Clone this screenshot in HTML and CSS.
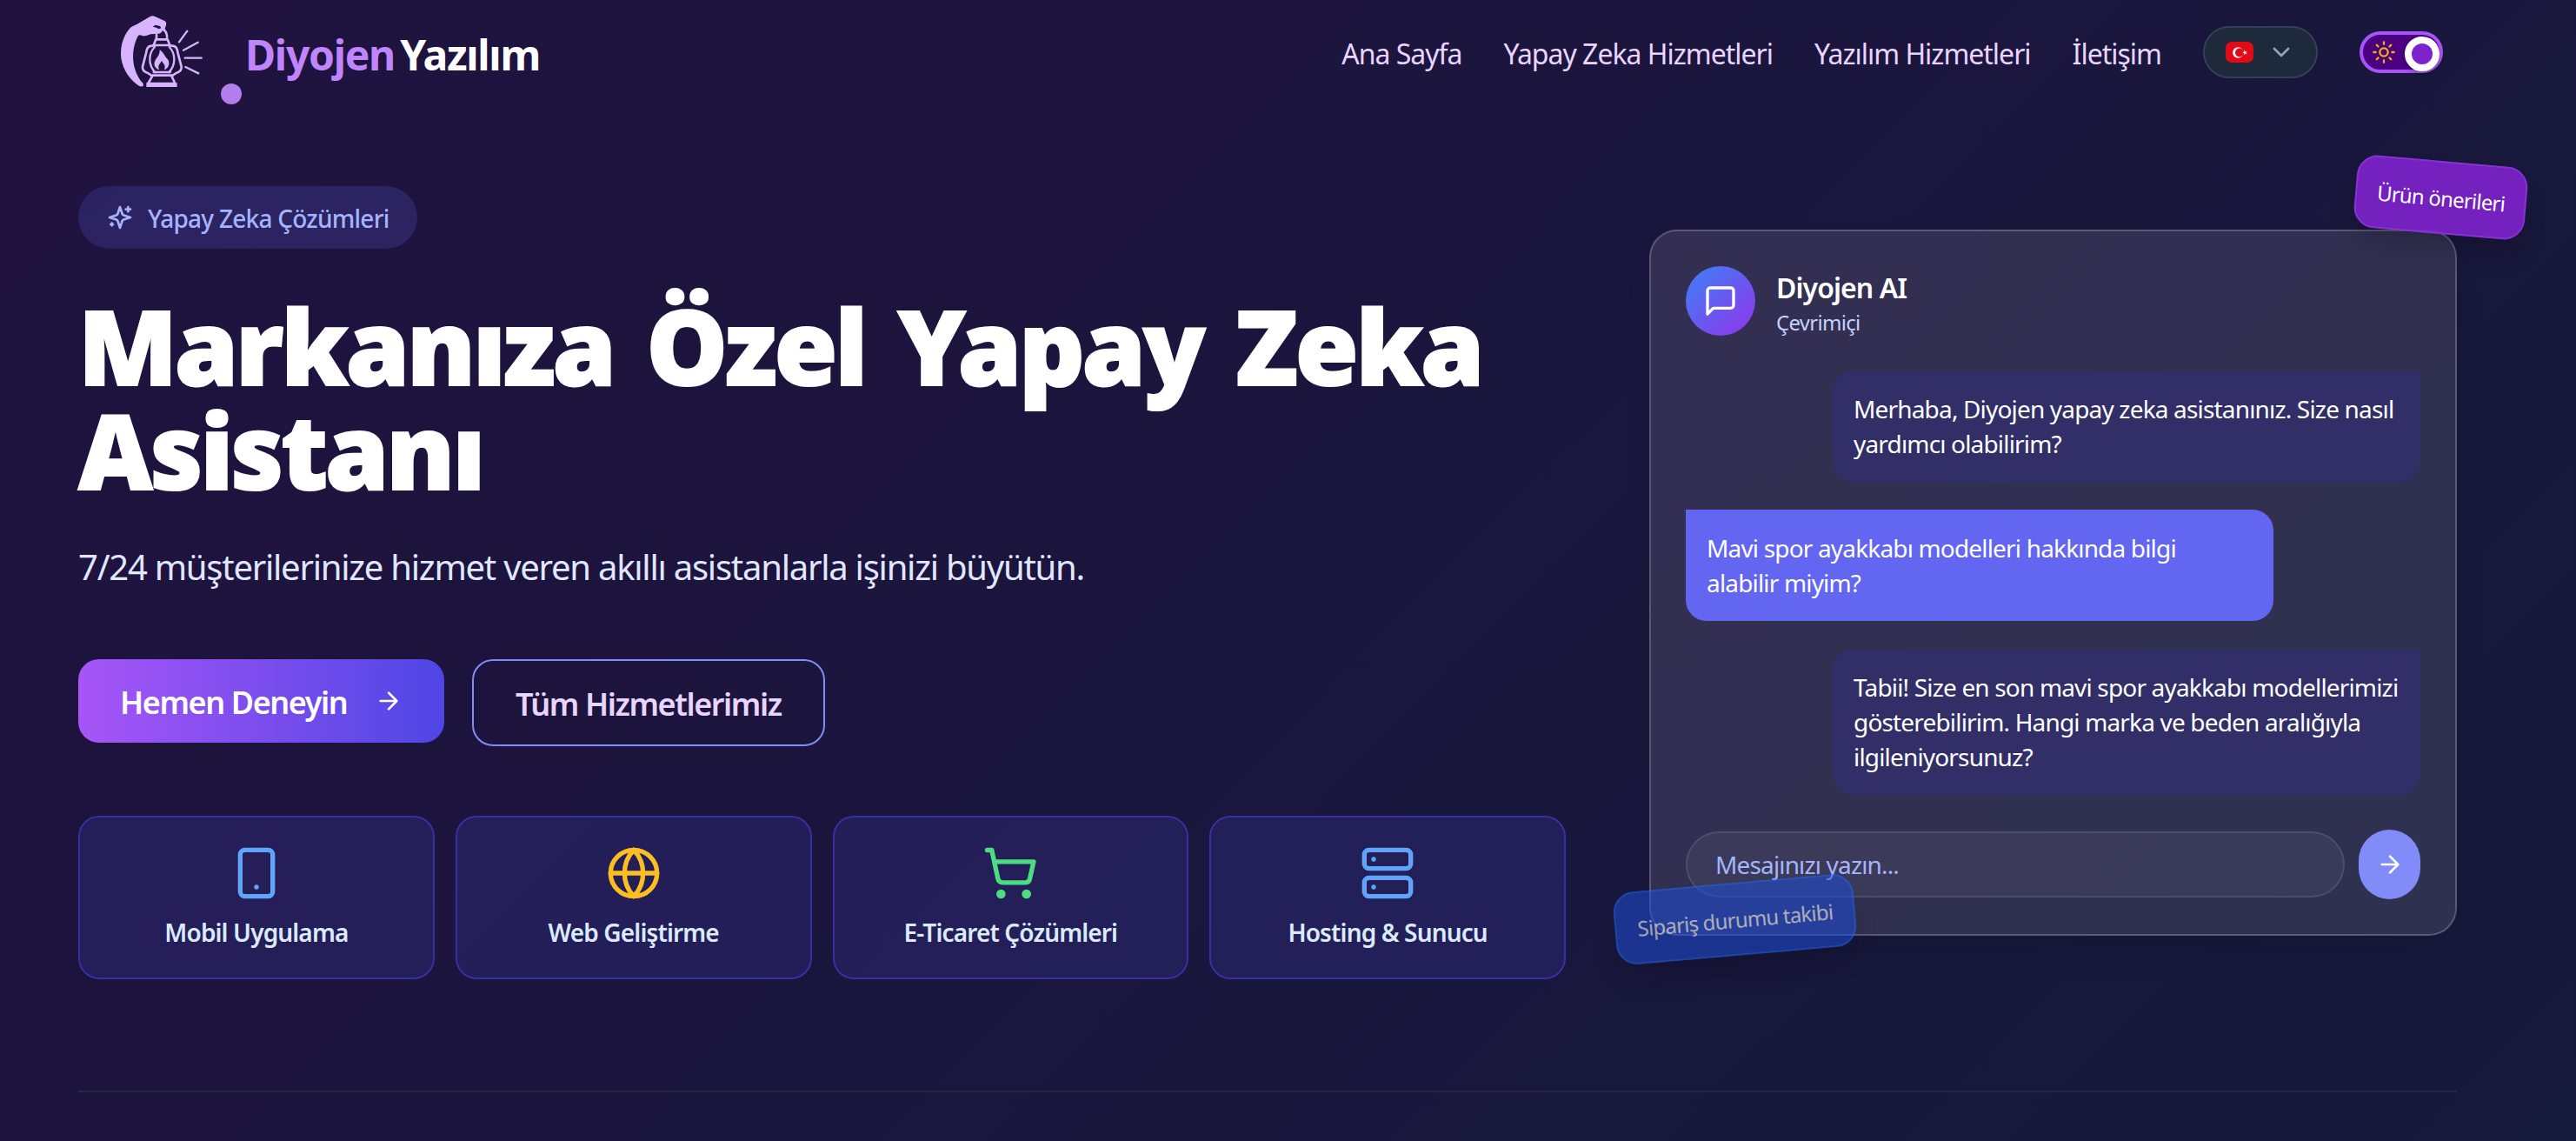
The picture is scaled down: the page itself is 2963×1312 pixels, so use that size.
FILE: index.html
```html
<!DOCTYPE html>
<html lang="tr">
<head>
<meta charset="utf-8">
<title>Diyojen Yazılım</title>
<link rel="stylesheet" href="styles.css">
</head>
<body>
<header class="header">
  <a class="brand">
    <svg class="brand-logo" viewBox="27 30 288 252" fill="none" stroke="#d8b4fe" stroke-width="8" stroke-linecap="round" stroke-linejoin="round">
      <path fill="#d8b4fe" stroke="none" d="M128 33Q137 28 145 33L178 48Q186 53 183 62L179 76C187 84 191 94 190 108L183 108C183 94 178 84 170 82Q166 94 154 92L130 94Q108 104 98 98Q88 94 84 104C62 150 62 215 102 262Q108 270 102 274Q96 276 86 270C40 236 27 190 27 160C28 110 50 82 62 70Q72 64 82 60Z"/>
      <path fill="#1f123f" stroke="none" d="M137 68L146 62L162 66L166 73L158 76L149 71Z"/>
      <path d="M150 96V110M148 112H188L196 132H140Z"/>
      <path d="M138 134C118 132 116 148 114 160L102 206Q100 222 120 228L132 236H206L218 228Q238 222 236 206L224 160C222 148 220 132 200 134"/>
      <path stroke-width="7" d="M144 138C122 160 120 200 146 226M194 138C216 160 218 200 192 226M140 225H198"/>
      <path fill="#d8b4fe" stroke="none" d="M161 148C178 160 178 172 190 182C198 196 190 214 176 217C184 204 174 196 168 186C162 196 152 204 160 217C146 214 138 200 145 186C150 174 162 168 161 148Z"/>
      <path d="M136 238L121 264H214L202 238"/>
      <path fill="#d8b4fe" stroke="none" d="M115 262H221V276H115Z"/>
      <path stroke-width="7" d="M228 121L256 83M243 149L293 122M248 176H305M250 207L295 229"/>
    </svg>
    <span class="brand-dot"></span>
    <span class="brand-name"><span class="accent">Diyojen</span> Yazılım</span>
  </a>
  <nav class="nav">
    <a>Ana Sayfa</a><a>Yapay Zeka Hizmetleri</a><a>Yazılım Hizmetleri</a><a>İletişim</a>
    <button class="lang">
      <svg width="32" height="24" viewBox="0 0 32 24"><rect width="32" height="24" rx="7" fill="#e30a17"/><circle cx="14.300" cy="12.500" r="6.200" fill="#fff"/><circle cx="16" cy="12.500" r="5" fill="#e30a17"/><path fill="#fff" d="M19.200 12.500l2-.7V9.600l1.400 1.800 2.200-.7-1.400 1.800 1.400 1.900-2.200-.8-1.400 1.900v-2.300z"/></svg>
      <svg class="icon chevron" width="32" height="32" viewBox="0 0 24 24"><path d="m6 9 6 6 6-6"/></svg>
    </button>
    <button class="toggle">
      <svg class="icon" width="28" height="28" viewBox="0 0 24 24"><circle cx="12" cy="12" r="4"/><path d="M12 2v2M12 20v2M4.930 4.930l1.410 1.410M17.660 17.660l1.410 1.410M2 12h2M20 12h2M6.340 17.660l-1.410 1.410M19.070 4.930l-1.410 1.410"/></svg>
      <span class="knob"></span>
    </button>
  </nav>
</header>
<main class="container">
  <section class="hero">
    <div class="intro">
      <div class="pill">
        <svg class="icon" width="32" height="32" viewBox="0 0 24 24"><path d="m12 3-1.912 5.813a2 2 0 0 1-1.275 1.275L3 12l5.813 1.912a2 2 0 0 1 1.275 1.275L12 21l1.912-5.813a2 2 0 0 1 1.275-1.275L21 12l-5.813-1.912a2 2 0 0 1-1.275-1.275L12 3ZM5 17v2M19 3v4M4 18h2M17 5h4"/></svg>
        <span>Yapay Zeka Çözümleri</span>
      </div>
      <h1>Markanıza Özel Yapay Zeka Asistanı</h1>
      <p class="lead">7/24 müşterilerinize hizmet veren akıllı asistanlarla işinizi büyütün.</p>
      <div class="actions">
        <a class="btn primary"><span>Hemen Deneyin</span><svg class="icon" width="32" height="32" viewBox="0 0 24 24"><path d="M5 12h14M12 5l7 7-7 7"/></svg></a>
        <a class="btn outline"><span>Tüm Hizmetlerimiz</span></a>
      </div>
      <div class="services">
        <div class="service"><svg class="icon blue" width="64" height="64" viewBox="0 0 24 24"><rect width="14" height="20" x="5" y="2" rx="2"/><path d="M12 18h.01"/></svg><span>Mobil Uygulama</span></div>
        <div class="service"><svg class="icon amber" width="64" height="64" viewBox="0 0 24 24"><circle cx="12" cy="12" r="10"/><path d="M12 2a14.500 14.500 0 0 0 0 20 14.500 14.500 0 0 0 0-20M2 12h20"/></svg><span>Web Geliştirme</span></div>
        <div class="service"><svg class="icon green" width="64" height="64" viewBox="0 0 24 24"><circle cx="8" cy="21" r="1"/><circle cx="19" cy="21" r="1"/><path d="M2.050 2.050h2l2.660 12.420a2 2 0 0 0 2 1.580h9.780a2 2 0 0 0 1.950-1.570l1.650-7.430H5.120"/></svg><span>E-Ticaret Çözümleri</span></div>
        <div class="service"><svg class="icon blue" width="64" height="64" viewBox="0 0 24 24"><rect width="20" height="8" x="2" y="2" rx="2"/><rect width="20" height="8" x="2" y="14" rx="2"/><path d="M6 6h.01M6 18h.01"/></svg><span>Hosting &amp; Sunucu</span></div>
      </div>
    </div>
    <div class="chat">
      <div class="chat-head">
        <div class="avatar"><svg class="icon" width="40" height="40" viewBox="0 0 24 24"><path d="M21 15a2 2 0 0 1-2 2H7l-4 4V5a2 2 0 0 1 2-2h14a2 2 0 0 1 2 2z"/></svg></div>
        <div class="chat-title"><div class="chat-name">Diyojen AI</div><div class="chat-status">Çevrimiçi</div></div>
      </div>
      <div class="messages">
        <div class="msg bot">Merhaba, Diyojen yapay zeka asistanınız. Size nasıl<br>yardımcı olabilirim?</div>
        <div class="msg user">Mavi spor ayakkabı modelleri hakkında bilgi<br>alabilir miyim?</div>
        <div class="msg bot">Tabii! Size en son mavi spor ayakkabı modellerimizi<br>gösterebilirim. Hangi marka ve beden aralığıyla<br>ilgileniyorsunuz?</div>
      </div>
      <div class="compose">
        <div class="field"><span>Mesajınızı yazın...</span></div>
        <button class="send"><svg class="icon" width="32" height="32" viewBox="0 0 24 24"><path d="M5 12h14M12 5l7 7-7 7"/></svg></button>
      </div>
      <div class="tag tag-products"><span>Ürün önerileri</span></div>
      <div class="tag tag-orders"><span>Sipariş durumu takibi</span></div>
    </div>
  </section>
</main>
</body>
</html>
```
FILE: styles.css
```css
* { box-sizing: border-box; }
html { height: 100%; }
body {
  margin: 0;
  height: 1312px;
  overflow: hidden;
  background: linear-gradient(135deg, #20123f 0%, #1b153d 45%, #15193b 100%);
  font-family: "Noto Sans", "Open Sans", sans-serif;
  color: #fff;
}
button { font: inherit; }
span, a, h1, p { white-space: nowrap; }
.icon { fill: none; stroke: currentColor; stroke-width: 2; stroke-linecap: round; stroke-linejoin: round; flex: none; }

.header { display: flex; justify-content: space-between; height: 120px; padding: 0 153px 0 139px; }
.brand { position: relative; display: flex; align-items: flex-start; gap: 47px; padding-top: 18px; }
.brand-logo { width: 96px; height: 84px; overflow: visible; }
.brand-dot { position: absolute; left: 115px; top: 96px; width: 24px; height: 24px; border-radius: 50%; background: #b47dee; }
.brand-name { font-size: 48px; font-weight: 700; line-height: 56px; padding-top: 17px; letter-spacing: -1.3px; word-spacing: -5px; }
.accent { color: #c084fc; }
.nav { display: flex; align-items: center; gap: 48px; font-size: 32px; line-height: 48px; color: #e9d5ff; letter-spacing: -1.01px; }
.nav a { padding-top: 3px; }
.lang { display: flex; align-items: center; gap: 16px; width: 132px; height: 60px; padding: 0 24px; border: 2px solid #334155; border-radius: 30px; background: #1e293b; }
.chevron { color: #94a3b8; }
.toggle { display: flex; align-items: center; justify-content: space-between; width: 96px; height: 48px; padding: 0 0 0 10px; border: 4px solid #a855f7; border-radius: 24px; background: #4b0082; color: #eab308; }
.knob { width: 40px; height: 40px; margin-top: 4px; border: 8px solid #fff; border-radius: 50%; background: #7e22ce; box-shadow: 0 4px 8px rgba(0, 0, 0, .2); }

.container { width: 2736px; margin-left: 90px; height: 1136px; border-bottom: 2px solid #1f2940; }
.hero { display: grid; grid-template-columns: 1711px 929px; gap: 96px; align-items: start; }
.intro { padding-top: 94px; }
.pill { display: flex; align-items: center; gap: 16px; height: 72px; width: 390px; padding: 0 32px; border-radius: 36px; background: rgba(99, 102, 241, .2); color: #a5b4fc; font-size: 28px; font-weight: 500; letter-spacing: -.75px; }
.pill span { padding-top: 2px; }
h1 { margin: 52px 0 0; font-size: 118px; line-height: 120px; font-weight: 900; letter-spacing: -3.25px; word-spacing: 10px; -webkit-text-stroke: 2px #fff; white-space: normal; }
.lead { margin: 46px 0 0; font-size: 40px; line-height: 56px; color: #e0e7ff; letter-spacing: -1.25px; }
.actions { display: flex; align-items: flex-start; gap: 32px; margin-top: 78px; }
.btn { display: flex; align-items: center; border-radius: 24px; font-size: 36px; font-weight: 600; letter-spacing: -1.42px; }
.btn span { padding-top: 2px; }
.primary { justify-content: space-between; width: 421px; height: 96px; padding: 0 48px; background: linear-gradient(90deg, #a855f7, #4f46e5); }
.outline { width: 406px; height: 100px; padding-left: 48px; border: 2px solid #818cf8; color: #e9d5ff; }
.services { display: grid; grid-template-columns: repeat(4, 1fr); gap: 24px; margin-top: 80px; }
.service { display: flex; flex-direction: column; align-items: center; gap: 16px; height: 188px; padding-top: 32px; border: 2px solid #3730a3; border-radius: 24px; background: rgba(49, 46, 129, .4); font-size: 28px; line-height: 40px; font-weight: 600; letter-spacing: -.86px; }
.service span { color: #dbeafe; }
.blue { color: #60a5fa; }
.amber { color: #fbbf24; }
.green { color: #4ade80; }

.chat { position: relative; height: 812px; margin-top: 144px; padding: 40px; border: 2px solid rgba(255, 255, 255, .2); border-radius: 32px; background: rgba(255, 255, 255, .11); box-shadow: 0 24px 48px -20px rgba(0, 0, 0, .16); }
.chat-head { display: flex; align-items: center; gap: 24px; height: 80px; margin-bottom: 40px; }
.chat-title { padding-top: 2px; }
.avatar { display: grid; place-items: center; width: 80px; height: 80px; border-radius: 50%; background: linear-gradient(135deg, #3b82f6, #9333ea); }
.chat-name { font-size: 32px; line-height: 48px; font-weight: 600; letter-spacing: -.95px; }
.chat-status { font-size: 24px; line-height: 32px; color: #c7d2fe; letter-spacing: -.7px; }
.messages { display: flex; flex-direction: column; gap: 32px; }
.msg { width: 676px; padding: 24px; font-size: 28px; line-height: 40px; white-space: nowrap; letter-spacing: -.83px; }
.bot { align-self: flex-end; border-radius: 24px 0 24px 24px; background: #322e68; }
.user { border-radius: 0 24px 24px 24px; background: #6366f1; }
.compose { display: flex; align-items: center; gap: 16px; margin-top: 40px; }
.field { flex: 1; height: 76px; padding: 0 32px; border: 2px solid rgba(255, 255, 255, .1); border-radius: 38px; background: rgba(255, 255, 255, .05); color: #a5b4fc; font-size: 28px; line-height: 72px; letter-spacing: -.85px; }
.send { display: grid; place-items: center; width: 71px; height: 80px; padding: 0; border: 0; border-radius: 40px; background: #818cf8; color: #fff; }
.tag { position: absolute; display: flex; align-items: center; height: 84px; padding: 0 24px; border: 2px solid; border-radius: 24px; font-size: 24px; letter-spacing: -.76px; box-shadow: 0 20px 30px -6px rgba(0, 0, 0, .2); }
.tag-products { left: 810px; top: -81px; width: 197px; padding-left: 23px; transform: rotate(5deg); background: rgba(126, 34, 206, .9); border-color: #8632d4; }
.tag-orders { left: -42px; top: 749px; width: 277px; transform: rotate(-5deg); background: rgba(29, 78, 216, .9); border-color: #2563eb; opacity: .6; }
```
